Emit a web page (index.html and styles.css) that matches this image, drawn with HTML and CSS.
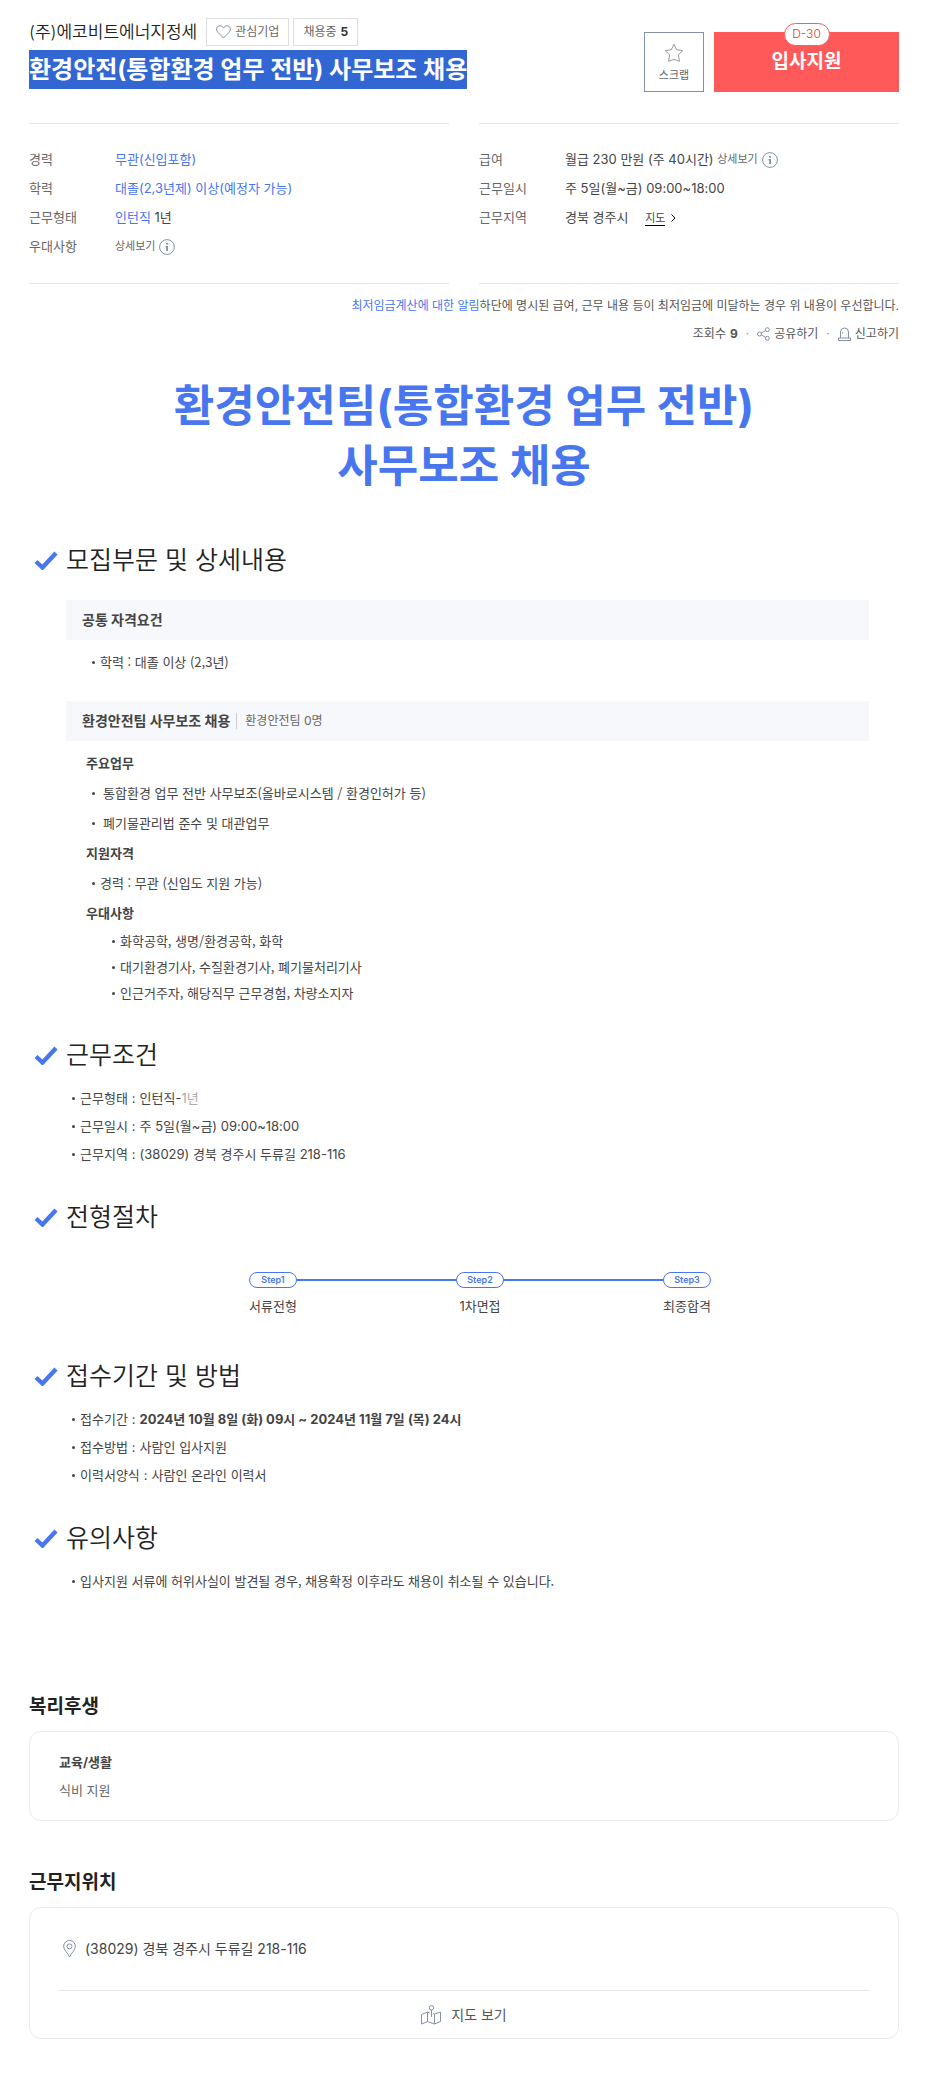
FILE: index.html
```
<!DOCTYPE html>
<html lang="ko">
<head>
    <meta charset="UTF-8">
    <meta name="viewport" content="width=device-width, initial-scale=1.0">
    <title>환경안전(통합환경 업무 전반) 사무보조 채용</title>
    <link rel="stylesheet" href="styles.css">
</head>
<body>

    <!-- 공용 아이콘 -->
    <svg class="sprite" aria-hidden="true">
        <symbol id="check" viewBox="0 0 24 20">
            <path d="M2 11.5l6.5 6L22 3" fill="none" stroke="#4876ef" stroke-width="4.4"/>
        </symbol>
        <symbol id="info" viewBox="0 0 16 16">
            <circle cx="8" cy="8" r="7.4" fill="none" stroke="#8491a7"/>
            <path d="M7 4h2v1.6H7zM6.600 7H9v5H7.200V8.400h-.6z" fill="#8491a7"/>
        </symbol>
    </svg>

    <div class="wrap">
        <header class="header">
            <div class="title-area">
                <div class="company">
                    <a href="#" class="company-name">(주)에코비트에너지정세</a>
                    <button type="button" class="chip">
                        <svg width="15" height="14" viewBox="0 0 15 14"><path d="M7.5 13L2 7.4C-.8 4.3 1 .8 4 .8c1.700 0 2.800.9 3.500 2.300C8.200 1.700 9.300.8 11 .8c3 0 4.800 3.500 2 6.600z" fill="none" stroke="#8491a7"/></svg>
                        관심기업
                    </button>
                    <a href="#" class="chip">채용중 <strong>5</strong></a>
                </div>
                <h1 class="title"><span>환경안전(통합환경 업무 전반) 사무보조 채용</span></h1>
            </div>
            <div class="actions">
                <button type="button" class="scrap">
                    <svg width="20" height="20" viewBox="0 0 20 20"><path d="M10 1.200l2.700 5.600 6.100.8-4.500 4.200 1.200 6.500L10 16.400l-5.500 1.900 1.200-6.500L1.200 7.600l6.100-.8z" fill="none" stroke="#999"/></svg>
                    스크랩
                </button>
                <button type="button" class="apply">
                    <span class="dday">D-30</span>
                    입사지원
                </button>
            </div>
        </header>

        <!-- 요약 정보 -->
        <section class="summary">
            <dl>
                <div><dt>경력</dt><dd class="blue">무관(신입포함)</dd></div>
                <div><dt>학력</dt><dd class="blue">대졸(2,3년제) 이상(예정자 가능)</dd></div>
                <div><dt>근무형태</dt><dd><span class="blue">인턴직</span> 1년</dd></div>
                <div><dt>우대사항</dt><dd><button type="button" class="detail">상세보기<svg width="16" height="16"><use href="#info"/></svg></button></dd></div>
            </dl>
            <dl>
                <div><dt>급여</dt><dd>월급 230 만원 (주 40시간) <button type="button" class="detail">상세보기<svg width="16" height="16"><use href="#info"/></svg></button></dd></div>
                <div><dt>근무일시</dt><dd>주 5일(월~금) 09:00~18:00</dd></div>
                <div><dt>근무지역</dt><dd>경북 경주시 <a href="#location" class="map-link"><span>지도</span><svg width="5" height="8" viewBox="0 0 5 8"><path d="M.5.5L4 4 .5 7.500" fill="none" stroke="#000"/></svg></a></dd></div>
            </dl>
        </section>

        <div class="notice">
            <p><a href="#">최저임금계산에 대한 알림</a>하단에 명시된 급여, 근무 내용 등이 최저임금에 미달하는 경우 위 내용이 우선합니다.</p>
            <ul>
                <li>조회수 <strong>9</strong></li>
                <li><button type="button"><svg width="13" height="14" viewBox="0 0 13 14" fill="none" stroke="#8491a7"><circle cx="2.500" cy="7" r="2"/><circle cx="10.300" cy="2.700" r="2"/><circle cx="10.300" cy="11.300" r="2"/><path d="M4.300 6l4.200-2.300M4.300 8l4.200 2.300"/></svg>공유하기</button></li>
                <li><button type="button"><svg width="13" height="14" viewBox="0 0 13 14" fill="none" stroke="#8491a7"><path d="M2.500 11V5a4 4 0 0 1 8 0v6M.5 13.500V11h12v2.500zM4.700 6.500V5"/></svg>신고하기</button></li>
            </ul>
        </div>

        <!-- 상세 모집요강 -->
        <article class="content">
            <h2 class="headline">환경안전팀(통합환경 업무 전반)<br>사무보조 채용</h2>

            <h3><svg width="24" height="20"><use href="#check"/></svg>모집부문 및 상세내용</h3>
            <div class="part">
                <h4 class="bar">공통 자격요건</h4>
                <ul class="list common">
                    <li>학력 : 대졸 이상 (2,3년)</li>
                </ul>
                <h4 class="bar">환경안전팀 사무보조 채용<span>환경안전팀 0명</span></h4>
                <div class="duty">
                    <h5>주요업무</h5>
                    <ul class="list wide">
                        <li>통합환경 업무 전반 사무보조(올바로시스템 / 환경인허가 등)</li>
                        <li>폐기물관리법 준수 및 대관업무</li>
                    </ul>
                    <h5>지원자격</h5>
                    <ul class="list">
                        <li>경력 : 무관 (신입도 지원 가능)</li>
                    </ul>
                    <h5>우대사항</h5>
                    <ul class="list nested">
                        <li>화학공학, 생명/환경공학, 화학</li>
                        <li>대기환경기사, 수질환경기사, 폐기물처리기사</li>
                        <li>인근거주자, 해당직무 근무경험, 차량소지자</li>
                    </ul>
                </div>
            </div>

            <h3><svg width="24" height="20"><use href="#check"/></svg>근무조건</h3>
            <ul class="list terms">
                <li><span>근무형태</span><span>:</span><span>인턴직-<em>1년</em></span></li>
                <li><span>근무일시</span><span>:</span><span>주 5일(월~금) 09:00~18:00</span></li>
                <li><span>근무지역</span><span>:</span><span>(38029) 경북 경주시 두류길 218-116</span></li>
            </ul>

            <h3><svg width="24" height="20"><use href="#check"/></svg>전형절차</h3>
            <ol class="steps">
                <li><span>Step1</span>서류전형</li>
                <li><span>Step2</span>1차면접</li>
                <li><span>Step3</span>최종합격</li>
            </ol>

            <h3><svg width="24" height="20"><use href="#check"/></svg>접수기간 및 방법</h3>
            <ul class="list terms">
                <li><span>접수기간</span><span>:</span><strong>2024년 10월 8일 (화) 09시 ~ 2024년 11월 7일 (목) 24시</strong></li>
                <li><span>접수방법</span><span>:</span><span>사람인 입사지원</span></li>
                <li><span>이력서양식</span><span>:</span><span>사람인 온라인 이력서</span></li>
            </ul>

            <h3><svg width="24" height="20"><use href="#check"/></svg>유의사항</h3>
            <ul class="list terms caution">
                <li>입사지원 서류에 허위사실이 발견될 경우, 채용확정 이후라도 채용이 취소될 수 있습니다.</li>
            </ul>
        </article>

        <!-- 복리후생 -->
        <section class="block">
            <h2>복리후생</h2>
            <div class="card welfare">
                <h3>교육/생활</h3>
                <p>식비 지원</p>
            </div>
        </section>

        <!-- 근무지위치 -->
        <section class="block" id="location">
            <h2>근무지위치</h2>
            <div class="card location">
                <address>
                    <svg width="13" height="18" viewBox="0 0 13 18" fill="none" stroke="#8491a7"><path d="M6.500 17C4.500 12.500.6 10 .6 6.400a5.900 5.900 0 0 1 11.800 0C12.400 10 8.500 12.500 6.500 17z"/><circle cx="6.500" cy="6.400" r="2.500"/></svg>
                    (38029) 경북 경주시 두류길 218-116
                </address>
                <button type="button">
                    <svg width="20" height="20" viewBox="0 0 20 20" fill="none" stroke="#8491a7"><path d="M8.500 8L6.500 7 .5 9.500v9.500l6-2.500 7 2.500 6-2.500V7l-6 2-1.500-.5M6.500 7v9.500M13.500 9v10M10.500 5v7"/><circle cx="10.500" cy="2.800" r="2.200"/></svg>
                    지도 보기
                </button>
            </div>
        </section>
    </div>

</body>
</html>
```
FILE: styles.css
```
* {
    box-sizing: border-box;
}

body, h1, h2, h3, h4, h5, p, ul, ol, dl, dd {
    margin: 0;
    padding: 0;
}

body {
    font-family: Inter, "Noto Sans CJK KR", sans-serif;
    font-size: 13px;
    line-height: 28px;
    color: #444;
    background: #fff;
}

ul, ol {
    list-style: none;
}

a {
    color: inherit;
    text-decoration: none;
}

button {
    padding: 0;
    border: 0;
    background: none;
    font: inherit;
    color: inherit;
    cursor: pointer;
}

svg {
    flex: none;
}

.sprite {
    position: absolute;
    width: 0;
    height: 0;
}

.wrap {
    padding: 18px 26px 39px 29px;
}

.blue, .notice a {
    color: #4876ef;
}

/* Header */
.header {
    display: flex;
    justify-content: space-between;
    margin-bottom: 31px;
}

.company {
    display: flex;
    align-items: center;
    gap: 4px;
    margin-bottom: 4px;
}

.company-name {
    margin-right: 5px;
    font-size: 17px;
    font-weight: 350;
    color: #222;
}

.chip {
    display: flex;
    align-items: center;
    gap: 4px;
    height: 28px;
    padding: 0 9px;
    border: 1px solid #dfdfdf;
    font-size: 12px;
    color: #666;
}

.chip strong {
    color: #333;
}

.title {
    font-size: 24px;
    line-height: 39px;
}

.title span {
    display: inline-block;
    background: #3267d3;
    color: #fff;
}

.actions {
    display: flex;
    gap: 10px;
    margin-top: 14px;
}

.scrap {
    display: flex;
    flex-direction: column;
    align-items: center;
    justify-content: center;
    gap: 2px;
    width: 60px;
    height: 60px;
    padding-top: 3px;
    border: 1px solid #8491a7;
    font-size: 11px;
    line-height: 20px;
    color: #666;
}

.apply {
    position: relative;
    width: 185px;
    height: 60px;
    background: #ff5959;
    font-size: 19px;
    font-weight: 700;
    line-height: 26px;
    color: #fff;
}

.dday {
    position: absolute;
    top: -9px;
    left: 50%;
    width: 46px;
    height: 23px;
    margin-left: -23px;
    border: 1px solid #ff5959;
    border-radius: 12px;
    background: #fff;
    font-size: 12px;
    font-weight: 300;
    line-height: 20px;
    color: #d83a3a;
}

/* Summary */
.summary {
    display: grid;
    grid-template-columns: 1fr 1fr;
    gap: 30px;
    margin-bottom: 8px;
}

.summary dl {
    padding: 21px 0 22px;
    border-top: 1px solid #e5e5e5;
    border-bottom: 1px solid #e5e5e5;
}

.summary dl > div {
    display: flex;
    height: 29px;
    line-height: 29px;
}

.summary dt {
    width: 86px;
    color: #666;
}

.detail {
    display: inline-flex;
    align-items: center;
    gap: 4px;
    font-size: 11px;
    color: #666;
    vertical-align: top;
}

.map-link {
    margin-left: 13px;
    font-size: 11px;
}

.map-link span {
    margin-right: 6px;
    border-bottom: 1px solid #000;
}

/* Notice */
.notice {
    font-size: 12px;
    text-align: right;
    color: #555;
}

.notice ul {
    display: flex;
    justify-content: flex-end;
}

.notice li {
    display: flex;
    align-items: center;
    gap: 4px;
}

.notice li + li::before {
    content: "·";
    margin: 0 4px 0 8px;
    color: #999;
}

.notice button {
    display: flex;
    align-items: center;
    gap: 4px;
}

/* Content */
.content {
    padding-top: 28px;
}

.headline {
    margin-bottom: 40px;
    font-size: 44px;
    line-height: 60px;
    text-align: center;
    color: #4876ef;
}

.content h3 {
    display: flex;
    align-items: center;
    gap: 8px;
    height: 48px;
    padding-left: 5px;
    font-size: 25px;
    font-weight: 350;
    color: #222;
}

.part {
    margin: 16px 30px 25px 37px;
}

.bar {
    display: flex;
    align-items: center;
    height: 40px;
    padding-left: 16px;
    background: #f7f8fc;
    font-size: 14px;
}

.bar span {
    margin-left: 6px;
    padding-left: 8px;
    border-left: 1px solid #ccc;
    font-size: 12px;
    font-weight: 400;
    line-height: 16px;
    color: #666;
}

.list li {
    display: flex;
}

.list li::before {
    content: "";
    flex: none;
    align-self: center;
    width: 3px;
    height: 3px;
    margin: 0 5px 0 1px;
    border-radius: 50%;
    background: #444;
}

.list.common,
.duty,
.caution {
    font-family: "Noto Sans CJK KR", sans-serif;
}

.list.common {
    padding: 8px 0 25px 25px;
}

.duty {
    padding: 7px 0 0 20px;
    line-height: 30px;
}

.duty h5 {
    font-size: 13px;
}

.duty .list {
    padding-left: 5px;
}

.duty .wide li::before {
    margin-right: 8px;
}

.duty .nested {
    padding-left: 25px;
    line-height: 26px;
}

.terms {
    margin: 5px 0 25px;
    padding-left: 42px;
}

.terms li > * + * {
    margin-left: 4px;
}

.terms em {
    font-style: normal;
    color: #aaa;
}

/* Steps */
.steps {
    display: flex;
    justify-content: space-between;
    width: 462px;
    margin: 31px auto 34px;
    position: relative;
    left: 16px;
    line-height: 24px;
}

.steps::before {
    content: "";
    position: absolute;
    top: 7px;
    left: 24px;
    right: 24px;
    height: 2px;
    background: #4876ef;
}

.steps li {
    width: 48px;
    text-align: center;
    white-space: nowrap;
}

.steps span {
    display: block;
    position: relative;
    height: 16px;
    margin-bottom: 6px;
    border: 1px solid #4876ef;
    border-radius: 8px;
    background: #fff;
    font-size: 9px;
    font-weight: 600;
    line-height: 14px;
    color: #4876ef;
}

/* Welfare, location */
.content + .block {
    margin-top: 98px;
}

.block {
    margin-top: 48px;
}

.block h2 {
    margin-bottom: 10px;
    font-size: 19px;
    color: #222;
}

.card {
    padding: 0 29px;
    border: 1px solid #eaeaea;
    border-radius: 12px;
}

.welfare {
    padding-top: 16px;
    padding-bottom: 16px;
}

.welfare h3 {
    font-size: 13px;
}

.welfare p {
    color: #666;
}

.location {
    font-size: 14px;
}

.location address {
    display: flex;
    align-items: center;
    gap: 9px;
    height: 82px;
    padding-left: 4px;
    font-style: normal;
}

.location button {
    display: flex;
    align-items: center;
    justify-content: center;
    gap: 10px;
    width: 100%;
    height: 48px;
    border-top: 1px solid #eaeaea;
    color: #555;
}
```
